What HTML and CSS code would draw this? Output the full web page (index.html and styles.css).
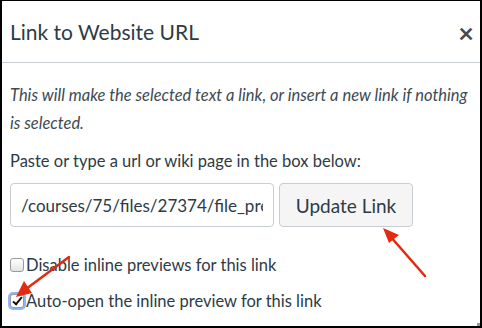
FILE: index.html
```html
<!DOCTYPE html>
<html lang="en">
<head>
  <meta charset="UTF-8" />
  <title>Link to Website URL</title>
  <link rel="stylesheet" href="styles.css">
</head>
<body>
  <div class="dialog">
    <div class="dialog-header">
      <h2 class="dialog-title">Link to Website URL</h2>
      <span class="close">&times;</span>
    </div>

    <div class="dialog-body">
      <p class="hint">This will make the selected text a link, or insert a new link if nothing is selected.</p>
      <p class="label">Paste or type a url or wiki page in the box below:</p>

      <div class="url-row">
        <input type="text" class="url-input" value="/courses/75/files/27374/file_preview">
        <button class="update-btn">Update Link</button>
      </div>

      <label class="check-row">
        <input type="checkbox">
        <span>Disable inline previews for this link</span>
      </label>
      <label class="check-row">
        <input type="checkbox" class="focused" checked>
        <span>Auto-open the inline preview for this link</span>
      </label>
    </div>

    <svg class="arrows" width="482" height="328" viewBox="0 0 482 328">
      <g stroke="#e3290f" stroke-width="2.5" fill="#e3290f" stroke-linecap="round">
        <line x1="425" y1="276" x2="390" y2="236" />
        <polygon points="383,228 399,235 389,243" stroke="none" />
        <line x1="69" y1="257" x2="26" y2="289" />
        <polygon points="16,297 24,281 32,293" stroke="none" />
      </g>
    </svg>
    <span class="grip"></span>
  </div>
</body>
</html>
```

FILE: styles.css
```css
body {
  margin: 0;
  background: #ffffff;
  font-family: 'Lato', 'Open Sans', sans-serif;
  color: #2d3b45;
}

.dialog {
  position: relative;
  box-sizing: border-box;
  width: 482px;
  height: 328px;
  border: 2px solid #000000;
  border-top-width: 1px;
  background: #ffffff;
  overflow: hidden;
}

.dialog-header {
  display: flex;
  align-items: center;
  justify-content: space-between;
  height: 61px;
  padding: 0 6px 0 8px;
  border-bottom: 1px solid #c7cdd1;
}

.dialog-title {
  margin: 0;
  font-size: 21px;
  font-weight: normal;
  color: #2d3b45;
}

.close {
  font-size: 27px;
  font-weight: bold;
  color: #4a4a4a;
  line-height: 1;
  margin-top: 2px;
}

.dialog-body {
  padding: 18px 8px 0 8px;
}

.hint {
  margin: 0;
  font-size: 16.5px;
  font-style: italic;
  line-height: 28px;
  color: #3d4a54;
}

.label {
  margin: 11px 0 0 0;
  font-size: 16.5px;
  line-height: 26px;
}

.url-row {
  display: flex;
  gap: 5px;
  margin-top: 9px;
}

.url-input {
  box-sizing: border-box;
  width: 264px;
  height: 44px;
  padding: 0 10px;
  border: 1px solid #c7cdd1;
  border-radius: 4px;
  font-family: inherit;
  font-size: 17px;
  color: #2d3b45;
  background: #ffffff;
}

.update-btn {
  box-sizing: border-box;
  width: 134px;
  height: 44px;
  border: 1px solid #c7cdd1;
  border-radius: 4px;
  background: #f5f5f5;
  font-family: inherit;
  font-size: 19px;
  color: #2d3b45;
}

.check-row {
  display: flex;
  align-items: center;
  gap: 2px;
  font-size: 16.5px;
  color: #2d3b45;
  line-height: 20px;
}

.check-row:first-of-type {
  margin-top: 28px;
}

.check-row + .check-row {
  margin-top: 16px;
}

.check-row input {
  appearance: none;
  position: relative;
  box-sizing: border-box;
  width: 14px;
  height: 14px;
  margin: 0;
  border: 1px solid #9a9a9a;
  border-radius: 3px;
  background: linear-gradient(#ffffff, #e4e4e4);
}

.check-row input:checked {
  background: #ffffff;
}

.check-row input:checked::after {
  content: "";
  position: absolute;
  left: 4px;
  top: 0;
  width: 3px;
  height: 8px;
  border-right: 2.5px solid #111111;
  border-bottom: 2.5px solid #111111;
  transform: rotate(40deg);
}

.check-row input.focused {
  box-shadow: 0 0 0 2px #8db6f5;
}

.arrows {
  position: absolute;
  left: -2px;
  top: -1px;
  pointer-events: none;
}

.grip {
  position: absolute;
  right: 0;
  bottom: 0;
  width: 3px;
  height: 3px;
  background: #999999;
}
```
